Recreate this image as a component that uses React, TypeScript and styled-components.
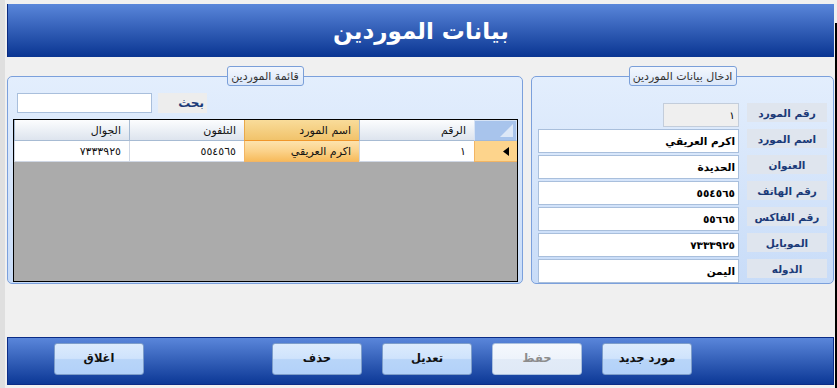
import React from 'react';
import styled, { createGlobalStyle } from 'styled-components';

const Global = createGlobalStyle`
  html, body { margin: 0; padding: 0; background: #f0f0f0; }
  body { font-family: "DejaVu Sans", "Liberation Sans", sans-serif; }
  * { box-sizing: border-box; }
`;

const Screen = styled.div`
  width: 837px;
  height: 388px;
  display: flex;
  background: #f0f0f0;
  overflow: hidden;
`;

const LeftStrip = styled.div`
  width: 5px;
  flex-shrink: 0;
  background: #dfdfdf;
`;

const RightEdge = styled.div`
  width: 3px;
  flex-shrink: 0;
  background: linear-gradient(to bottom, #f0f0f0 23px, transparent 23px),
    linear-gradient(to right, #f0f0f0 1px, #000 1px);
`;

const Main = styled.div`
  flex: 1;
  min-width: 0;
  display: flex;
  flex-direction: column;
  padding: 4px 0 0 2px;
`;

const Header = styled.header`
  height: 53px;
  border-left: 1px solid #0a2a80;
  background: linear-gradient(#5986da, #0a3592);
  display: flex;
  align-items: center;
  justify-content: center;
  color: #fff;
  font-weight: bold;
  font-size: 23px;
  direction: rtl;
`;

const Content = styled.div`
  display: flex;
  gap: 8px;
  margin-top: 9px;
`;

const Panel = styled.section<{ $w: number }>`
  width: ${(p) => p.$w}px;
  display: flex;
  flex-direction: column;
  align-items: center;
`;

const Tab = styled.div<{ $w: number }>`
  position: relative;
  z-index: 1;
  width: ${(p) => p.$w}px;
  height: 20px;
  margin-bottom: -10px;
  border: 1px solid #7a9fd9;
  border-radius: 3px;
  background: linear-gradient(#f3f7fd, #dbe7f9);
  display: flex;
  align-items: center;
  justify-content: center;
  font-size: 11px;
  color: #333;
  direction: rtl;
`;

const Box = styled.div`
  align-self: stretch;
  height: 208px;
  border: 1px solid #7ba0dc;
  border-radius: 5px;
  background: linear-gradient(#e3eefd, #c8dcf8);
  display: flex;
  flex-direction: column;
`;

const ListBox = styled(Box)`
  padding-top: 16px;
`;

const FormBox = styled(Box)`
  padding: 26px 6px 0 6px;
  gap: 2px;
`;

const SearchRow = styled.div`
  display: flex;
  gap: 6px;
  margin-left: 9px;
  height: 20px;
`;

const SearchInput = styled.div`
  width: 135px;
  height: 20px;
  background: #fff;
  border: 1px solid #a9bfdc;
`;

const SearchLabel = styled.div`
  width: 49px;
  height: 20px;
  background: #ededed;
  color: #1b3a78;
  font-weight: bold;
  font-size: 12px;
  direction: rtl;
  display: flex;
  align-items: center;
  padding-right: 3px;
`;

const Grid = styled.div`
  margin: 6px 4px 0 5px;
  height: 163px;
  border: 1px solid #000;
  background: #ababab;
  direction: rtl;
`;

const GridRow = styled.div`
  display: grid;
  grid-template-columns: 43px repeat(4, 115px);
  height: 21px;
`;

const HeadCell = styled.div<{ $sel?: boolean }>`
  border-left: 1px solid ${(p) => (p.$sel ? '#e9a94a' : '#a7bbd3')};
  border-bottom: 1px solid ${(p) => (p.$sel ? '#f0962a' : '#a7bbd3')};
  background: ${(p) =>
    p.$sel ? 'linear-gradient(#f9dc9a, #f1c36b)' : 'linear-gradient(#fcfdfe, #dde4ee)'};
  font-size: 11px;
  color: #111;
  display: flex;
  align-items: center;
  padding-right: 8px;
`;

const CornerCell = styled.div`
  background: #a8c4ec;
  border: 1px solid #d6e3f5;
  border-bottom-color: #9fb8da;
  display: flex;
  align-items: flex-end;
  justify-content: flex-start;
  padding: 0 3px 3px 0;
`;

const DataCell = styled.div<{ $sel?: boolean }>`
  border-left: 1px solid ${(p) => (p.$sel ? '#f2b564' : '#cfd7e4')};
  border-bottom: 1px solid ${(p) => (p.$sel ? '#f2b564' : '#cfd7e4')};
  background: ${(p) =>
    p.$sel ? 'linear-gradient(#fde3ae 0%, #fbd28a 50%, #f7bb5c 100%)' : '#fff'};
  font-size: 11px;
  color: #111;
  display: flex;
  align-items: center;
  padding-right: 8px;
`;

const RowHead = styled.div`
  background: #fdd48c;
  border-left: 1px solid #f2b564;
  border-bottom: 1px solid #f2b564;
  display: flex;
  align-items: center;
  padding-right: 8px;
`;

const FieldRow = styled.div`
  display: flex;
  gap: 8px;
  justify-content: flex-end;
  height: 24px;
`;

const Field = styled.div<{ $w?: number; $ro?: boolean }>`
  ${(p) => (p.$w ? `width: ${p.$w}px;` : 'flex: 1;')}
  height: 24px;
  border: 1px solid ${(p) => (p.$ro ? '#c3cddb' : '#a9bfdc')};
  background: ${(p) => (p.$ro ? '#efefef' : '#fff')};
  direction: rtl;
  display: flex;
  align-items: center;
  padding-right: 3px;
  font-size: 10.5px;
  font-weight: ${(p) => (p.$ro ? 'normal' : 'bold')};
  color: #000;
`;

const FieldLabel = styled.div`
  width: 80px;
  height: 19px;
  background: #dfe5ee;
  color: #1b3a78;
  font-weight: bold;
  font-size: 10.5px;
  direction: rtl;
  display: flex;
  align-items: center;
  justify-content: center;
`;

const Footer = styled.footer`
  margin-top: 53px;
  height: 48px;
  border: 1px solid #0b2c86;
  background: linear-gradient(#5a86da, #0c3896);
  display: flex;
  gap: 20px;
  padding: 5px 0 0 46px;
`;

const Button = styled.div<{ $disabled?: boolean; $after?: number }>`
  width: 90px;
  height: 32px;
  margin-right: ${(p) => p.$after ?? 0}px;
  border: 1px solid ${(p) => (p.$disabled ? '#a9bfdd' : '#7d9dca')};
  border-radius: 3px;
  background: ${(p) =>
    p.$disabled
      ? 'linear-gradient(#f5f8fd 0%, #edf3fb 50%, #e2ebf7 51%, #dfe9f6 100%)'
      : 'linear-gradient(#dcebfd 0%, #cfe3fc 48%, #b8d5f9 52%, #b2d1f9 100%)'};
  color: ${(p) => (p.$disabled ? '#8c8c8c' : '#111')};
  font-weight: bold;
  font-size: 11.5px;
  direction: rtl;
  display: flex;
  justify-content: center;
  align-items: flex-start;
  padding-top: 7px;
`;

const Title = styled.h1`
  margin: 0;
  font: inherit;
`;

const fields: { label: string; value: string; ro?: boolean }[] = [
  { label: 'رقم المورد', value: '١', ro: true },
  { label: 'اسم المورد', value: 'اكرم العريقي' },
  { label: 'العنوان', value: 'الحديدة' },
  { label: 'رقم الهاتف', value: '٥٥٤٥٦٥' },
  { label: 'رقم الفاكس', value: '٥٥٦٦٥' },
  { label: 'الموبايل', value: '٧٣٣٣٩٢٥' },
  { label: 'الدوله', value: 'اليمن' },
];

export default function App() {
  return (
    <Screen>
      <Global />
      <LeftStrip />
      <Main>
        <Header>
          <Title>بيانات الموردين</Title>
        </Header>
        <Content>
          <Panel $w={516}>
            <Tab $w={77}>قائمة الموردين</Tab>
            <ListBox>
              <SearchRow>
                <SearchInput />
                <SearchLabel>بحث</SearchLabel>
              </SearchRow>
              <Grid>
                <GridRow>
                  <CornerCell>
                    <svg width="13" height="13" viewBox="0 0 13 13">
                      <polygon points="13,0 13,13 0,13" fill="#dde8f7" />
                    </svg>
                  </CornerCell>
                  <HeadCell>الرقم</HeadCell>
                  <HeadCell $sel>اسم المورد</HeadCell>
                  <HeadCell>التلفون</HeadCell>
                  <HeadCell>الجوال</HeadCell>
                </GridRow>
                <GridRow>
                  <RowHead>
                    <svg width="6" height="9" viewBox="0 0 6 9">
                      <polygon points="6,0 6,9 0,4.5" fill="#000" />
                    </svg>
                  </RowHead>
                  <DataCell>١</DataCell>
                  <DataCell $sel>اكرم العريقي</DataCell>
                  <DataCell>٥٥٤٥٦٥</DataCell>
                  <DataCell>٧٣٣٣٩٢٥</DataCell>
                </GridRow>
              </Grid>
            </ListBox>
          </Panel>
          <Panel $w={303}>
            <Tab $w={108}>ادخال بيانات الموردين</Tab>
            <FormBox>
              {fields.map((f) => (
                <FieldRow key={f.label}>
                  <Field $w={f.ro ? 76 : undefined} $ro={f.ro}>
                    {f.value}
                  </Field>
                  <FieldLabel>{f.label}</FieldLabel>
                </FieldRow>
              ))}
            </FormBox>
          </Panel>
        </Content>
        <Footer>
          <Button $after={108}>اغلاق</Button>
          <Button>حذف</Button>
          <Button>تعديل</Button>
          <Button $disabled>حفظ</Button>
          <Button>مورد جديد</Button>
        </Footer>
      </Main>
      <RightEdge />
    </Screen>
  );
}
